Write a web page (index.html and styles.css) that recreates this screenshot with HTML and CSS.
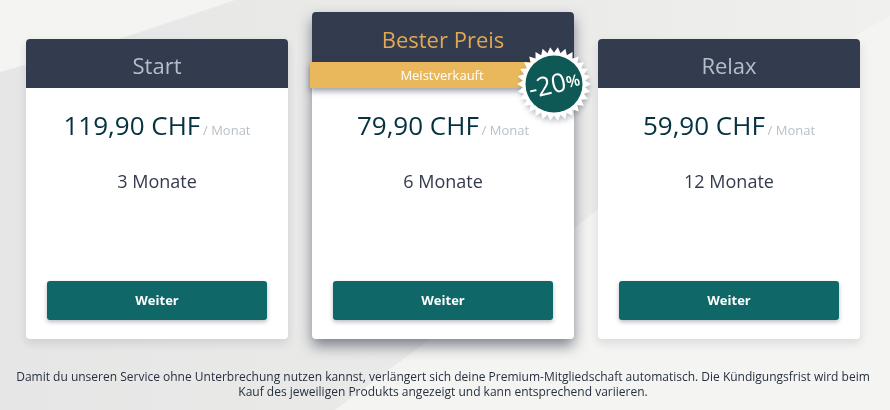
FILE: index.html
```html
<!DOCTYPE html>
<html lang="de">
<head>
<meta charset="utf-8">
<meta name="viewport" content="width=device-width, initial-scale=1">
<title>Premium-Mitgliedschaft</title>
<link rel="stylesheet" href="styles.css">
</head>
<body>
<svg class="backdrop" viewBox="0 0 890 410" preserveAspectRatio="none" aria-hidden="true">
  <defs>
    <linearGradient id="band" x1="0" y1="0" x2="1" y2="0">
      <stop offset="0" stop-color="#e6e6e6"/>
      <stop offset="0.35" stop-color="#e9e9e8"/>
      <stop offset="0.65" stop-color="#ebebea"/>
      <stop offset="1" stop-color="#f0f0ee"/>
    </linearGradient>
  </defs>
  <path fill="url(#band)" d="M0 72 L125 37 L235 0 H890 V16 L855 36 L600 208 L425 343 L335 410 H0 Z"/>
</svg>
<main class="pricing">
  <div class="plans">
    <section class="plan">
      <h2 class="plan-title">Start</h2>
      <div class="plan-body">
        <p class="price">119,90 CHF <span class="per">/ Monat</span></p>
        <p class="term">3 Monate</p>
        <button class="buy" type="button">Weiter</button>
      </div>
    </section>
    <section class="plan plan-featured">
      <h2 class="plan-title">Bester Preis</h2>
      <p class="ribbon">Meistverkauft</p>
      <svg class="badge" viewBox="-38 -38 76 76" role="img" aria-label="-20%">
        <g fill="#fff" transform="rotate(6)">
          <path id="tri" d="M0 -37 L32.04 18.5 H-32.04 Z"/>
          <use href="#tri" transform="rotate(12)"/>
          <use href="#tri" transform="rotate(24)"/>
          <use href="#tri" transform="rotate(36)"/>
          <use href="#tri" transform="rotate(48)"/>
          <use href="#tri" transform="rotate(60)"/>
          <use href="#tri" transform="rotate(72)"/>
          <use href="#tri" transform="rotate(84)"/>
          <use href="#tri" transform="rotate(96)"/>
          <use href="#tri" transform="rotate(108)"/>
        </g>
        <circle r="28.5" fill="#0e5955"/>
        <text class="badge-text" text-anchor="middle" y="9" transform="rotate(-13)">-20<tspan class="badge-unit" dy="-2">%</tspan></text>
      </svg>
      <div class="plan-body">
        <p class="price">79,90 CHF <span class="per">/ Monat</span></p>
        <p class="term">6 Monate</p>
        <button class="buy" type="button">Weiter</button>
      </div>
    </section>
    <section class="plan">
      <h2 class="plan-title">Relax</h2>
      <div class="plan-body">
        <p class="price">59,90 CHF <span class="per">/ Monat</span></p>
        <p class="term">12 Monate</p>
        <button class="buy" type="button">Weiter</button>
      </div>
    </section>
  </div>
  <p class="note">Damit du unseren Service ohne Unterbrechung nutzen kannst, verlängert sich deine Premium-Mitgliedschaft automatisch. Die Kündigungsfrist wird beim Kauf des jeweiligen Produkts angezeigt und kann entsprechend variieren.</p>
</main>
</body>
</html>
```
FILE: styles.css
```css
* {
  box-sizing: border-box;
}

body {
  margin: 0;
  background: #f4f4f2;
  color: #333b4d;
  font-family: "Open Sans", "Noto Sans", sans-serif;
}

h2,
p {
  margin: 0;
  font-weight: 400;
}

.backdrop {
  position: fixed;
  inset: 0;
  z-index: -1;
  width: 100%;
  height: 100%;
}

.pricing {
  padding: 12px 14px 12px 10px;
}

.plans {
  display: grid;
  grid-template-columns: repeat(3, 1fr);
  align-items: end;
  gap: 24px;
  padding: 0 16px;
}

.plan {
  position: relative;
  border-radius: 4px;
  background: #fff;
  box-shadow: 0 4px 10px rgba(51, 59, 77, 0.14);
  text-align: center;
}

.plan-featured {
  box-shadow: 0 7px 14px rgba(51, 59, 77, 0.6);
}

.plan-title {
  padding: 11px 0 8px;
  border-radius: 4px 4px 0 0;
  background: #333b4f;
  color: #b4bfca;
  font-size: 22px;
  line-height: 30px;
}

.plan-featured .plan-title {
  padding-top: 12px;
  color: #e0a850;
}

.ribbon {
  margin-left: -2px;
  background: #e9b85c;
  box-shadow: 0 3px 6px rgba(51, 59, 77, 0.5);
  color: #fff;
  font-size: 13px;
  line-height: 26px;
}

.badge {
  position: absolute;
  top: 34px;
  right: -18px;
  width: 76px;
  height: 76px;
  filter: drop-shadow(1px 3px 2px rgba(51, 59, 77, 0.3));
}

.badge-text {
  fill: #fff;
  font-size: 26px;
}

.badge-unit {
  font-size: 16px;
  font-weight: 600;
}

.plan-body {
  padding: 19px 21px;
}

.price {
  color: #05323f;
  font-size: 26px;
  line-height: 36px;
  white-space: nowrap;
}

.per {
  margin-left: -4px;
  color: #b9c0c6;
  font-size: 13px;
}

.term {
  margin: 20px 0 87px;
  font-size: 18px;
  line-height: 26px;
}

.buy {
  display: block;
  width: 100%;
  height: 39px;
  padding: 0 0 2px;
  border: 0;
  border-radius: 3px;
  background: #0f6767;
  box-shadow: 0 2px 4px rgba(51, 59, 77, 0.35);
  color: #fff;
  font: 700 13px/20px "Open Sans", "Noto Sans", sans-serif;
  cursor: pointer;
}

.note {
  margin-top: 30px;
  color: #27303f;
  font-size: 12px;
  line-height: 15px;
  text-align: center;
}
```
